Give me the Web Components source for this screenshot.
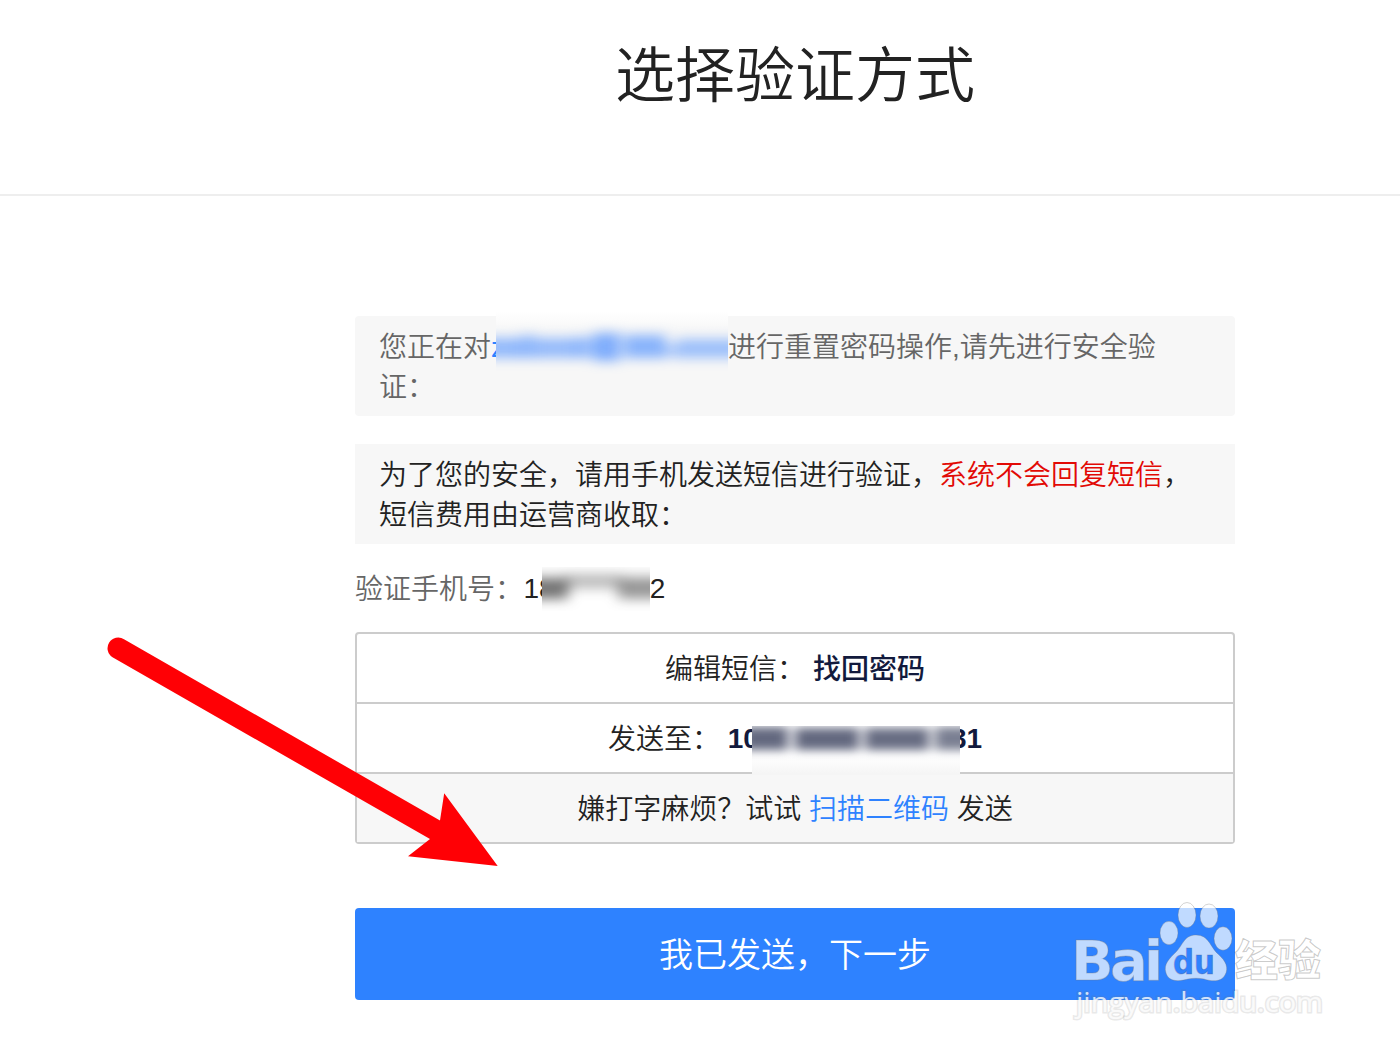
<!DOCTYPE html>
<html lang="zh-CN">
<head>
<meta charset="UTF-8">
<title>选择验证方式</title>
<style>
    html, body { margin: 0; overflow: hidden; }
    body {
        position: relative; width: 1400px; height: 1052px; background: #fff; color: #222;
        font: 350 28px/40px "Liberation Sans", "Noto Sans CJK SC", sans-serif;
    }
    .num { vertical-align: 1px; line-height: 1; }
</style>
</head>
<body>
<verify-page>
    <page-header slot="header">选择验证方式</page-header>
    <notice-box tone="muted">您正在对<a-link>z</a-link><redact-mask kind="mail"></redact-mask>进行重置密码操作,请先进行安全验<br>证：</notice-box>
    <notice-box>为了您的安全，请用手机发送短信进行验证，<span style="color:#e20a05">系统不会回复短信</span>，<br>短信费用由运营商收取：</notice-box>
    <phone-row label="验证手机号："><span class="num">18<redact-mask kind="phone"></redact-mask>2</span></phone-row>
    <sms-table>
        <sms-row>编辑短信： <b>找回密码</b></sms-row>
        <sms-row>发送至： <b class="num">10<redact-mask kind="target"></redact-mask>31</b></sms-row>
        <sms-row shaded>嫌打字麻烦？试试 <a-link>扫描二维码</a-link> 发送</sms-row>
    </sms-table>
    <next-button>我已发送，下一步</next-button>
</verify-page>
<red-arrow></red-arrow>
<site-watermark></site-watermark>

<script>
class BaseElement extends HTMLElement {
    constructor() {
        super();
        this.attachShadow({ mode: 'open' });
    }
    // trimmed, so that inline elements get no stray space before their slot
    connectedCallback() { this.shadowRoot.innerHTML = this.render().replace(/\n\s*/g, ''); }
}

class VerifyPage extends BaseElement {
    render() {
        return `
        <style>
            :host { display: block; }
            main { display: flex; flex-direction: column; width: 880px; margin: 120px 0 0 355px; }
        </style>
        <slot name="header"></slot>
        <main><slot></slot></main>`;
    }
}

class PageHeader extends BaseElement {
    render() {
        return `
        <style>
            :host { display: block; height: 194px; border-bottom: 2px solid #eee; }
            h1 { margin: 0; padding: 32px 0 0 190px; font-size: 60px; line-height: 90px; font-weight: 350; text-align: center; }
        </style>
        <h1><slot></slot></h1>`;
    }
}

class NoticeBox extends BaseElement {
    render() {
        return `
        <style>
            :host { display: block; height: 80px; margin-bottom: 28px; padding: 12px 24px 8px; background: #f7f7f7; white-space: nowrap; }
            :host([tone="muted"]) { color: #666; border-radius: 4px; }
        </style>
        <slot></slot>`;
    }
}

class ALink extends BaseElement {
    render() {
        return `
        <style>:host { color: #2e82ff; cursor: pointer; }</style>
        <slot></slot>`;
    }
}

class PhoneRow extends BaseElement {
    render() {
        return `
        <style>
            :host { display: flex; height: 40px; margin: -2px 0 22px; white-space: nowrap; }
            .label { color: #666; width: 168.5px; }
        </style>
        <span class="label">${this.getAttribute('label')}</span>
        <span><slot></slot></span>`;
    }
}

class SmsTable extends BaseElement {
    render() {
        return `
        <style>
            :host { display: block; border: 2px solid #ccc; border-radius: 4px; margin-bottom: 64px; }
        </style>
        <slot></slot>`;
    }
}

class SmsRow extends BaseElement {
    render() {
        return `
        <style>
            :host { display: block; height: 66px; padding-top: 2px; line-height: 68px; text-align: center; white-space: nowrap; border-bottom: 2px solid #ccc; }
            :host([shaded]) { background: #f7f7f7; border-bottom: 0; }
            ::slotted(b) { color: #121a3d; font-weight: 500; }
            ::slotted(b.num) { font-weight: 700; }
        </style>
        <slot></slot>`;
    }
}

// each mark is [x, y, width, height, opacity]
const MASKS = {
    mail: {
        w: 232, h: 70, left: -9, right: 0, up: -46, color: '#2e7cff', blur: 7,
        bg: 'linear-gradient(#fff, #f7f7f7 20px)',
        marks: [[-12, 27, 40, 20, .5], [26, 24, 12, 23, .45], [36, 27, 47, 20, .48], [80, 26, 18, 21, .45], [98, 22, 26, 28, .6], [128, 24, 42, 23, .55], [168, 34, 14, 12, .3], [180, 28, 66, 19, .45]]
    },
    phone: {
        w: 108, h: 44, left: -13, right: 0, up: -31, color: '#222', blur: 7,
        bg: '#fff',
        marks: [[-14, 12, 40, 20, .62], [22, 8, 58, 14, .24], [76, 12, 50, 20, .45], [-14, 5, 136, 14, .1]]
    },
    target: {
        w: 208, h: 49, left: -7, right: -9, up: -22, color: '#121a3d', blur: 6,
        bg: 'linear-gradient(#fff 30px, #f5f5f5 48px)',
        marks: [[-10, 1, 46, 23, .66], [43, 2, 64, 22, .66], [113, 2, 64, 22, .64], [183, 1, 38, 23, .56]]
    }
};

class RedactMask extends BaseElement {
    render() {
        const m = MASKS[this.getAttribute('kind')];
        return `
        <style>
            :host { display: inline-block; position: relative; z-index: 1; width: ${m.w}px; height: 0; margin: 0 ${m.right}px 0 ${m.left}px; }
            svg { position: absolute; left: 0; top: ${m.up}px; overflow: hidden; background: ${m.bg}; }
            rect { fill: ${m.color}; }
        </style>
        <svg width="${m.w}" height="${m.h}">
            <filter id="soft" filterUnits="userSpaceOnUse" x="-40" y="-40" width="320" height="160" color-interpolation-filters="sRGB"><feGaussianBlur stdDeviation="${m.blur} ${m.blur - 1}"/></filter>
            <g filter="url(#soft)">
                ${m.marks.map(([x, y, w, h, o]) => `<rect x="${x}" y="${y}" width="${w}" height="${h}" opacity="${o}"/>`).join('')}
            </g>
        </svg>`;
    }
}

class NextButton extends BaseElement {
    render() {
        return `
        <style>
            :host { display: block; }
            button {
                display: block; width: 100%; height: 92px; padding: 2px 0 0; border: 0; border-radius: 4px;
                background: #2e82ff; color: #fff; font: inherit; font-size: 34px; line-height: 90px; cursor: pointer;
            }
        </style>
        <button><slot></slot></button>`;
    }
}

class RedArrow extends BaseElement {
    render() {
        return `
        <style>
            :host { position: absolute; left: 90px; top: 620px; z-index: 2; pointer-events: none; }
            svg { display: block; }
        </style>
        <svg width="430" height="260" fill="#ff0005">
            <path d="M34 19.2 350 200.5 354.2 173.2 407.7 246 318 236.3 340 219 22.5 37.3A10.7 10.7 0 0 1 34 19.2Z"/>
        </svg>`;
    }
}

class SiteWatermark extends BaseElement {
    render() {
        return `
        <style>
            :host { position: absolute; left: 1060px; top: 890px; z-index: 3; pointer-events: none; }
            svg { display: block; }
            .ink { fill: #fff; fill-opacity: .7; stroke: #777; stroke-opacity: .32; stroke-width: 1; }
            text { font-family: "DejaVu Sans", "Noto Sans CJK SC", sans-serif; font-weight: 700; }
            .cn { font-weight: 900; stroke-opacity: .4; }
            .url { font-family: "Open Sans", "Noto Sans", sans-serif; font-weight: 500; paint-order: stroke; stroke-width: 3; stroke-opacity: .17; fill-opacity: .8; }
        </style>
        <svg width="280" height="140">
            <g class="ink">
                <text x="11 50 84" y="89.5" font-size="56">Bai</text>
                <ellipse cx="109" cy="43" rx="9" ry="11.7"/>
                <ellipse cx="127" cy="25" rx="9" ry="12.5"/>
                <ellipse cx="149" cy="26" rx="9" ry="12"/>
                <ellipse cx="163" cy="48.5" rx="9" ry="11.7"/>
                <path d="M136 45C149 45 150 57 158 64C166 71 169 78 165 85C161 93 150 91 144 89C139 88 133 88 128 89C121 91 109 93 106 83C103 74 110 68 116 62C123 55 124 45 136 45Z"/>
            </g>
            <text x="113" y="83.5" font-size="33" textLength="42" lengthAdjust="spacingAndGlyphs" fill="#2e82ff" stroke="#557" stroke-opacity=".3">du</text>
            <text class="ink cn" x="175" y="86" font-size="43" textLength="86" lengthAdjust="spacingAndGlyphs">经验</text>
            <text class="ink url" x="16" y="122" font-size="27.5" textLength="247" lengthAdjust="spacingAndGlyphs">jingyan.baidu.com</text>
        </svg>`;
    }
}

customElements.define('verify-page', VerifyPage);
customElements.define('page-header', PageHeader);
customElements.define('notice-box', NoticeBox);
customElements.define('a-link', ALink);
customElements.define('phone-row', PhoneRow);
customElements.define('sms-table', SmsTable);
customElements.define('sms-row', SmsRow);
customElements.define('redact-mask', RedactMask);
customElements.define('next-button', NextButton);
customElements.define('red-arrow', RedArrow);
customElements.define('site-watermark', SiteWatermark);
</script>
</body>
</html>
